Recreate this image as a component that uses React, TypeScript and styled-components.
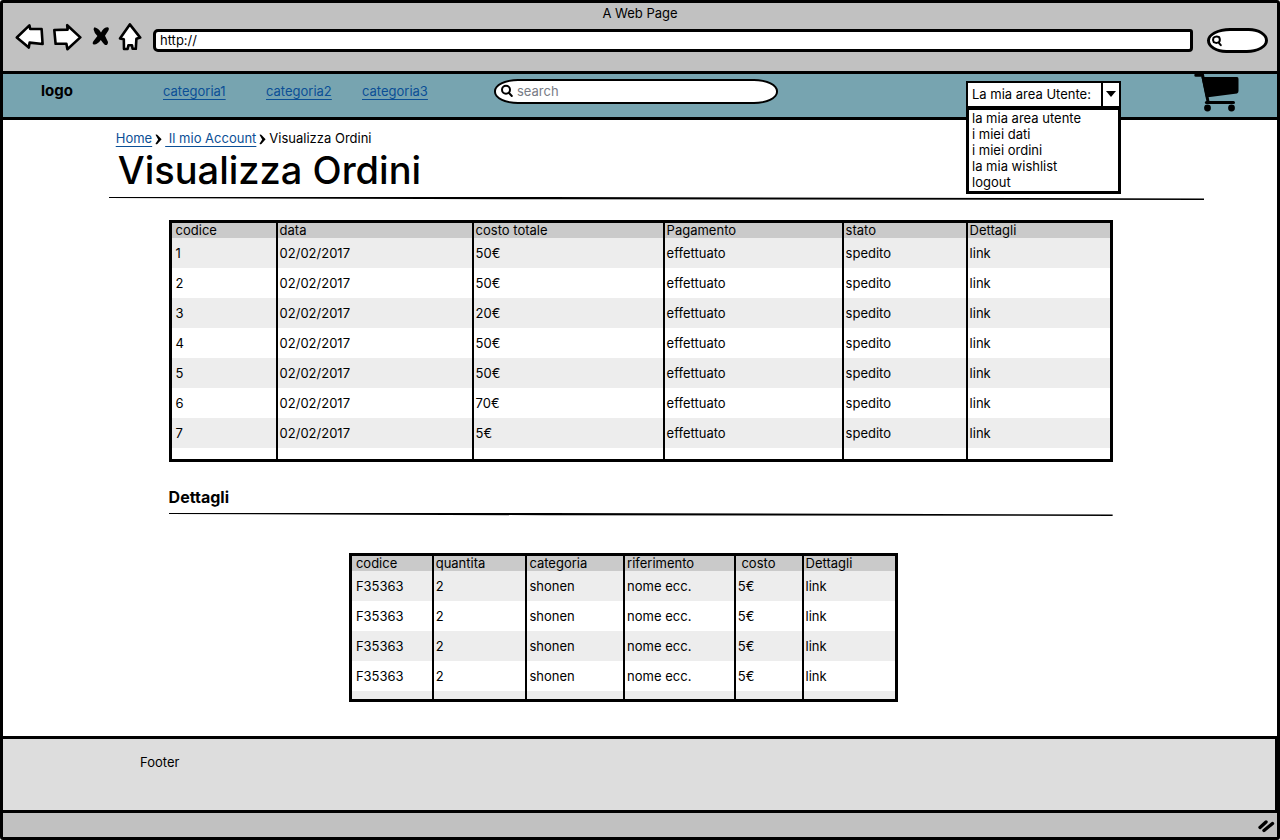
import React from "react";
import styled, { createGlobalStyle } from "styled-components";

const GlobalStyle = createGlobalStyle`
  *, *::before, *::after { box-sizing: border-box; }
  body { margin: 0; background: #fff; }
  body, button, input, select, table {
    font-family: Inter, "Liberation Sans", sans-serif;
    font-size: 13px;
    line-height: 16px;
    color: #000;
  }
`;

const Frame = styled.div`
  min-height: 100vh;
  display: flex;
  flex-direction: column;
  border: 3px solid #000;
  border-radius: 3px;
`;

const Chrome = styled.header`
  background: #c1c1c1;
  border-bottom: 3px solid #000;
  padding-bottom: 18px;
`;

const WindowTitle = styled.div`
  text-align: center;
  line-height: 20px;
`;

const Toolbar = styled.div`
  display: flex;
  align-items: flex-start;
  padding: 0 9px 0 12px;
`;

const ToolButton = styled.button<{ $gap: number }>`
  display: block;
  border: 0;
  padding: 0;
  background: none;
  margin-right: ${(p) => p.$gap}px;
  svg { display: block; }
`;

const Address = styled.input`
  flex: 1;
  min-width: 0;
  height: 23px;
  margin: 6px 14px 0 0;
  padding: 0 4px 1px;
  border: 3px solid #000;
  border-radius: 5px 3px 4px 5px;
  background: #fff;
  outline: 0;
`;

const BrowserSearch = styled.label`
  display: flex;
  align-items: center;
  width: 61px;
  height: 25px;
  margin-top: 5px;
  padding-left: 1px;
  border: 3px solid #000;
  border-radius: 24px 20px 22px 20px / 13px;
  background: #fff;
  input { width: 36px; border: 0; padding: 0; background: none; outline: 0; }
`;

const Nav = styled.nav`
  display: grid;
  grid-template-columns: 122fr 103fr 96fr 132fr 284fr 188fr 155fr 73fr 47fr 36fr;
  height: 46px;
  padding-left: 38px;
  background: #77a4b0;
  border-bottom: 3px solid #000;
`;

const Logo = styled.strong`
  font-size: 15px;
  line-height: 34px;
`;

const Link = styled.a`
  color: #0b4f96;
  text-decoration: underline;
  text-underline-offset: 3px;
`;

const NavLink = styled(Link)`
  line-height: 34px;
`;

const SearchBox = styled.label`
  grid-column: 5;
  display: flex;
  align-items: center;
  gap: 3px;
  height: 25px;
  margin-top: 5px;
  padding: 0 16px 2px 4px;
  border: 2px solid #000;
  border-radius: 24px / 12px;
  background: #fff;
  input { flex: 1; min-width: 0; border: 0; padding: 0; background: none; outline: 0; }
  input::placeholder { color: #777b85; opacity: 1; }
`;

const UserArea = styled.div`
  grid-column: 7;
  position: relative;
  height: 27px;
  margin-top: 7px;
`;

const UserSelect = styled.select`
  appearance: none;
  display: block;
  width: 100%;
  height: 27px;
  padding: 0 20px 2px 4px;
  border: 2px solid #000;
  border-radius: 0;
  background: #fff;
  outline: 0;
`;

const SelectArrow = styled.span`
  position: absolute;
  top: 0;
  right: 0;
  display: flex;
  align-items: center;
  justify-content: center;
  width: 20px;
  height: 100%;
  padding-bottom: 2px;
  border: 2px solid #000;
  pointer-events: none;
`;

const Menu = styled.ul`
  position: absolute;
  z-index: 2;
  top: 26px;
  left: 0;
  width: 100%;
  margin: 0;
  padding: 0 0 1px 3px;
  list-style: none;
  background: #fff;
  border: 3px solid #000;
`;

const MenuItem = styled.button`
  display: block;
  border: 0;
  padding: 0;
  background: none;
`;

const CartLink = styled.a`
  grid-column: 9;
  color: #000;
  svg { display: block; }
`;

const Main = styled.main`
  flex: 1;
  padding-bottom: 30px;
`;

const PageHead = styled.section`
  width: 86%;
  margin-left: 8.3%;
  padding: 10px 7px 0;
`;

const Crumbs = styled.nav`
  display: flex;
  align-items: center;
  svg { margin: 3px 3px 0; }
`;

const CrumbLink = styled(Link)`
  white-space: pre;
`;

const Title = styled.h1`
  margin: 0 0 0 2px;
  font-size: 38px;
  line-height: 48px;
  font-weight: 500;
`;

const Rule = styled.hr`
  height: 3px;
  margin: 0;
  border: 0;
  background: #000;
  clip-path: polygon(0 0, 40% 0, 100% 50%, 100% 100%, 40% 75%, 0 33%);
`;

const TitleRule = styled(Rule)`
  margin: 3px -7px 0;
`;

const Section = styled.section`
  width: 74.1%;
  margin: 20px 0 0 13%;
`;

const SubTitle = styled.h2`
  margin: 25px 0 6px;
  font-size: 16px;
  line-height: 20px;
`;

const Table = styled.table`
  width: 100%;
  table-layout: fixed;
  border: 3px solid #000;
  border-collapse: separate;
  border-spacing: 0;
  th, td { padding: 0 0 0 2px; text-align: left; font-weight: 400; white-space: pre; }
  th + th, td + td { border-left: 2px solid #000; }
  th:first-child, td:first-child { padding-left: 4px; }
  thead tr { height: 15px; background: #cacaca; }
  th { line-height: 15px; }
  tbody tr { height: 30px; }
  tbody tr:nth-child(odd) { background: #ededed; }
`;

const DetailWrap = styled.div`
  width: 58.2%;
  margin: 37px 0 0 19.1%;
`;

const Filler = styled.tr<{ $h: number }>`
  && { height: ${(p) => p.$h}px; }
`;

const Footer = styled.footer`
  height: 74px;
  padding: 15px 0 0 137px;
  border-top: 3px solid #000;
  border-right: 2px solid #000;
  background: #ddd;
`;

const StatusBar = styled.div`
  display: flex;
  justify-content: flex-end;
  align-items: center;
  height: 27px;
  padding: 2px 2px 0;
  border-top: 3px solid #000;
  background: #c1c1c1;
`;

interface GridProps {
  label: string;
  widths: number[];
  head: string[];
  rows: string[][];
  filler: number;
}

function DataTable({ label, widths, head, rows, filler }: GridProps) {
  const total = widths.reduce((a, b) => a + b, 0);
  return (
    <Table aria-label={label}>
      <colgroup>
        {widths.map((w, i) => (
          <col key={i} style={{ width: `${(w / total) * 100}%` }} />
        ))}
      </colgroup>
      <thead>
        <tr>{head.map((h) => <th key={h} scope="col">{h}</th>)}</tr>
      </thead>
      <tbody>
        {rows.map((r, i) => (
          <tr key={i}>{r.map((c, j) => <td key={j}>{c}</td>)}</tr>
        ))}
        <Filler $h={filler}>{head.map((h) => <td key={h} />)}</Filler>
      </tbody>
    </Table>
  );
}

const Magnifier = () => (
  <svg width="14" height="14" viewBox="0 0 14 14" fill="none" stroke="#000" strokeWidth="2" strokeLinecap="round" aria-hidden="true">
    <circle cx="6" cy="5.8" r="4" />
    <path d="M8.8 8.8l3 3.2" />
  </svg>
);

const SmallMagnifier = () => (
  <svg width="12" height="14" viewBox="0 0 12 14" fill="none" stroke="#000" strokeWidth="2" strokeLinecap="round" aria-hidden="true">
    <path d="M2.5 3.8Q5 1.6 8.2 3.2 9.6 6 8 8.2 5.4 9.6 2.8 8.2 1.4 6 2.5 3.8ZM7.6 8.6L9.8 11.2" />
  </svg>
);

const Chevron = () => (
  <svg width="7" height="11" viewBox="0 0 7 11" aria-hidden="true">
    <path d="M.5 .8Q1.8 0 3 1.6L6.6 5.3 2.4 10Q1.4 10.8.5 9.8L3.2 5.5Z" />
  </svg>
);

const sketch = { fill: "#fff", stroke: "#000", strokeWidth: 2.6, strokeLinejoin: "round" as const };

const orders = ["50€", "50€", "20€", "50€", "50€", "70€", "5€"].map((cost, i) => [
  String(i + 1), "02/02/2017", cost, "effettuato", "spedito", "link",
]);

const details = Array.from({ length: 4 }, () => ["F35363", "2", "shonen", "nome ecc.", "5€", "link"]);

const menuItems = ["la mia area utente", "i miei dati", "i miei ordini", "la mia wishlist", "logout"];

export default function App() {
  return (
    <>
      <GlobalStyle />
      <Frame>
        <Chrome>
          <WindowTitle>A Web Page</WindowTitle>
          <Toolbar>
            <ToolButton $gap={8} aria-label="Indietro">
              <svg width="30" height="28" viewBox="15 23 30 28">
                <path {...sketch} d="M16.8 37.5L29.4 25.4 30.2 29 41.6 29 42.6 44 29.6 42.6 28.8 47.6Z" />
              </svg>
            </ToolButton>
            <ToolButton $gap={8} aria-label="Avanti">
              <svg width="30" height="28" viewBox="53 23 30 28">
                <path {...sketch} d="M80.3 37.4L67.2 25.2 67.6 29.6 54.3 30 55.6 43.8 66.4 43.8 67.4 49.2Z" />
              </svg>
            </ToolButton>
            <ToolButton $gap={7} aria-label="Interrompi">
              <svg width="20" height="28" viewBox="92 23 20 28">
                <path d="M95.5 27.2Q99.5 28 102 32.4 104.6 27.2 108.8 27.2 110.6 28 109.4 30.4L106 35.8 109 42Q109 45.6 106 45 103.5 42.5 101.8 40 98.5 44.6 95 44.4 92.8 44 94.2 41.4L98.4 36Q95 32.5 94.6 29.5 94.6 28 95.5 27.2Z" />
              </svg>
            </ToolButton>
            <ToolButton $gap={11} aria-label="Pagina iniziale">
              <svg width="24" height="28" viewBox="118 23 24 28">
                <path {...sketch} d="M129.8 24.4L140.2 37.6 136.4 38.8 135.8 48.8 132.6 48.8 132 45.2 128.4 45.2 127.6 49 124 49 123.8 39.2 120 38.4Z" />
              </svg>
            </ToolButton>
            <Address aria-label="Indirizzo" defaultValue="http://" />
            <BrowserSearch>
              <SmallMagnifier />
              <input aria-label="Cerca nel web" />
            </BrowserSearch>
          </Toolbar>
        </Chrome>

        <Nav>
          <Logo>logo</Logo>
          <div><NavLink href="#categoria1">categoria1</NavLink></div>
          <div><NavLink href="#categoria2">categoria2</NavLink></div>
          <div><NavLink href="#categoria3">categoria3</NavLink></div>
          <SearchBox>
            <Magnifier />
            <input aria-label="Cerca" placeholder="search" />
          </SearchBox>
          <UserArea>
            <UserSelect aria-label="Area utente">
              <option>La mia area Utente:</option>
            </UserSelect>
            <SelectArrow>
              <svg width="10" height="6" viewBox="0 0 10 6"><path d="M0 0H10L5 6Z" /></svg>
            </SelectArrow>
            <Menu>
              {menuItems.map((m) => <li key={m}><MenuItem>{m}</MenuItem></li>)}
            </Menu>
          </UserArea>
          <CartLink href="#carrello" aria-label="Carrello">
            <svg width="47" height="39" viewBox="1194 74 47 39">
              <path d="M1195.8 75.2H1202.6L1208 101.5" fill="none" stroke="#000" strokeWidth="3" strokeLinecap="round" />
              <path d="M1201.5 77L1237 77Q1238.6 77 1238.5 79V91Q1238.5 93 1237 93.4L1206 97.4Z" />
              <path d="M1206.4 102.4H1233.5" stroke="#000" strokeWidth="3" strokeLinecap="round" />
              <circle cx="1207.5" cy="108" r="3.4" />
              <circle cx="1231.5" cy="108" r="3.4" />
            </svg>
          </CartLink>
        </Nav>

        <Main>
          <PageHead>
            <Crumbs aria-label="Percorso">
              <CrumbLink href="#home">Home</CrumbLink>
              <Chevron />
              <CrumbLink href="#account"> Il mio Account</CrumbLink>
              <Chevron />
              <span>Visualizza Ordini</span>
            </Crumbs>
            <Title>Visualizza Ordini</Title>
            <TitleRule />
          </PageHead>

          <Section>
            <DataTable
              label="Ordini"
              widths={[104, 196, 191, 179, 124, 144]}
              head={["codice", "data", "costo totale", "Pagamento", "stato", "Dettagli"]}
              rows={orders}
              filler={11}
            />
            <SubTitle>Dettagli</SubTitle>
            <Rule />
            <DetailWrap>
              <DataTable
                label="Dettagli ordine"
                widths={[80, 94, 98, 111, 68, 94]}
                head={["codice", "quantita", "categoria", "riferimento", " costo", "Dettagli"]}
                rows={details}
                filler={8}
              />
            </DetailWrap>
          </Section>
        </Main>

        <Footer>Footer</Footer>
        <StatusBar>
          <svg width="17" height="14" viewBox="0 0 17 14" fill="none" stroke="#000" strokeWidth="3.4" strokeLinecap="round" aria-hidden="true">
            <path d="M2 8.4L8 3M6 11.5L14.5 4.5" />
          </svg>
        </StatusBar>
      </Frame>
    </>
  );
}
